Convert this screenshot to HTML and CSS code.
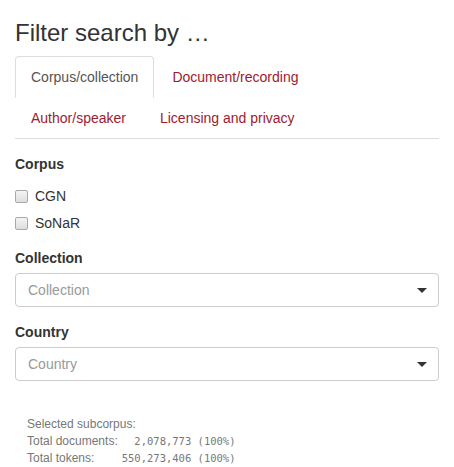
FILE: index.html
```html
<!DOCTYPE html>
<html>
<head>
<meta charset="utf-8">
<link rel="stylesheet" href="styles.css">
</head>
<body>
<div class="container">
  <h3 class="title">Filter search by …</h3>
  <ul class="tabs">
    <li class="tab active"><a>Corpus/collection</a></li>
    <li class="tab"><a>Document/recording</a></li>
    <li class="tab"><a>Author/speaker</a></li>
    <li class="tab"><a>Licensing and privacy</a></li>
  </ul>
  <div class="tab-content">
    <div class="form-group">
      <label class="control-label">Corpus</label>
      <div class="options">
        <div class="checkbox"><span class="box"></span><span>CGN</span></div>
        <div class="checkbox"><span class="box"></span><span>SoNaR</span></div>
      </div>
    </div>
    <div class="form-group">
      <label class="control-label">Collection</label>
      <div class="select"><span class="placeholder">Collection</span><span class="caret"></span></div>
    </div>
    <div class="form-group">
      <label class="control-label">Country</label>
      <div class="select"><span class="placeholder">Country</span><span class="caret"></span></div>
    </div>
    <div class="summary">
      <div class="summary-head">Selected subcorpus:</div>
      <div class="stats">
        <span>Total documents:</span><span class="num">2,078,773 (100%)</span>
        <span>Total tokens:</span><span class="num">550,273,406 (100%)</span>
      </div>
    </div>
  </div>
</div>
</body>
</html>
```

FILE: styles.css
```css
html, body {
  margin: 0;
  padding: 0;
  background: #fff;
}
body {
  font-family: "Liberation Sans", Arial, sans-serif;
  font-size: 14px;
  line-height: 20px;
  color: #333;
}
.container {
  padding: 0 15px;
}
.title {
  margin: 20px 0 10px;
  font-size: 24px;
  font-weight: 500;
  line-height: 26.4px;
  color: #333;
}
.tabs {
  list-style: none;
  margin: 0;
  padding: 0;
  display: flex;
  flex-wrap: wrap;
  border-bottom: 1px solid #ddd;
}
.tab {
  margin-bottom: -1px;
}
.tab a {
  display: block;
  padding: 10px 15px;
  margin-right: 2px;
  line-height: 20px;
  border: 1px solid transparent;
  border-radius: 4px 4px 0 0;
  color: #9c1b2f;
}
.tab.active a {
  color: #555;
  background: #fff;
  border-color: #ddd #ddd transparent #ddd;
}
.tab-content {
  padding-top: 15px;
}
.form-group {
  margin-bottom: 15px;
}
.control-label {
  display: block;
  font-weight: bold;
  margin-bottom: 5px;
}
.options {
  display: flex;
  flex-direction: column;
  gap: 7px;
  padding-top: 7px;
}
.checkbox {
  display: flex;
  align-items: center;
  gap: 7px;
  height: 20px;
}
.box {
  width: 11px;
  height: 11px;
  border: 1px solid #a9a9a9;
  border-radius: 2px;
  background: linear-gradient(#f4f4f4, #dedede);
  margin-top: 1px;
}
.select {
  display: flex;
  align-items: center;
  justify-content: space-between;
  height: 32px;
  border: 1px solid #ccc;
  border-radius: 4px;
  padding: 0 12px;
}
.placeholder {
  color: #999;
}
.caret {
  width: 0;
  height: 0;
  border-left: 5px solid transparent;
  border-right: 5px solid transparent;
  border-top: 5px solid #333;
  margin-right: -1px;
}
.summary {
  padding: 20px 12px 0;
  font-size: 12px;
  line-height: 17px;
  color: #777;
}
.stats {
  display: grid;
  grid-template-columns: auto auto;
  justify-content: start;
  column-gap: 4px;
}
.num {
  font-family: "DejaVu Sans Mono", "Liberation Mono", monospace;
  font-size: 10.5px;
  text-align: right;
}
```
